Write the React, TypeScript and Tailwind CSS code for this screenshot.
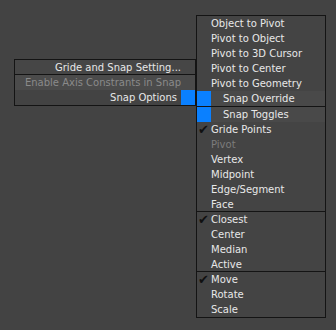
import React from 'react';

type Item = { label: string; checked?: boolean; disabled?: boolean; last?: boolean };

const groupA: Item[] = [
  { label: 'Gride Points', checked: true },
  { label: 'Pivot', disabled: true },
  { label: 'Vertex' },
  { label: 'Midpoint' },
  { label: 'Edge/Segment' },
  { label: 'Face', last: true },
];
const groupB: Item[] = [
  { label: 'Closest', checked: true },
  { label: 'Center' },
  { label: 'Median' },
  { label: 'Active', last: true },
];
const groupC: Item[] = [
  { label: 'Move', checked: true },
  { label: 'Rotate' },
  { label: 'Scale' },
];
const topItems = ['Object to Pivot', 'Pivot to Object', 'Pivot to 3D Cursor', 'Pivot to Center', 'Pivot to Geometry'];

const Row: React.FC<{ item: Item }> = ({ item }) => (
  <div className={item.last ? 'h-[15px] flex items-center border-b border-[#141414]' : 'h-[15px] flex items-center'}>
    <span className="w-[14px] pl-[1px] text-[13px] leading-none text-[#101010]">{item.checked ? '✔' : ''}</span>
    <span className={item.disabled ? 'text-[#7c7c7c]' : 'text-[#e8e8e8]'}>{item.label}</span>
  </div>
);

export default function App() {
  return (
    <div className="w-[336px] h-[330px] bg-[#434343] flex items-start font-['DejaVu_Sans',sans-serif] text-[10px] leading-[15px] text-[#e8e8e8]">
      <div className="ml-[14px] mt-[59px] w-[182px] border border-[#141414] flex flex-col">
        <div className="h-[15px] bg-[#464646] border-b border-[#141414] text-right pr-[14px]">Gride and Snap Setting...</div>
        <div className="h-[15px] bg-[#4b4b4b] text-right pr-[14px] text-[#8a8a8a]">Enable Axis Constrants in Snap</div>
        <div className="h-[15px] bg-[#434343] flex justify-end items-center">
          <span className="mr-[4px]">Snap Options</span>
          <span className="w-[14px] h-[15px] bg-[#0a80ff]" />
        </div>
      </div>
      <div className="mt-[15px] w-[130px] border border-[#141414] bg-[#444444] flex flex-col">
        {topItems.map(t => (
          <div key={t} className="h-[15px] pl-[14px]">{t}</div>
        ))}
        <div className="h-[15px] flex bg-[#494949]">
          <span className="w-[14px] h-[15px] bg-[#0a80ff]" />
          <span className="pl-[12px]">Snap Override</span>
        </div>
        <div className="h-px bg-[#141414]" />
        <div className="h-[15px] flex bg-[#494949]">
          <span className="w-[14px] h-[15px] bg-[#0a80ff]" />
          <span className="pl-[12px]">Snap Toggles</span>
        </div>
        {groupA.map(i => <Row key={i.label} item={i} />)}
        {groupB.map(i => <Row key={i.label} item={i} />)}
        {groupC.map(i => <Row key={i.label} item={i} />)}
      </div>
    </div>
  );
}
